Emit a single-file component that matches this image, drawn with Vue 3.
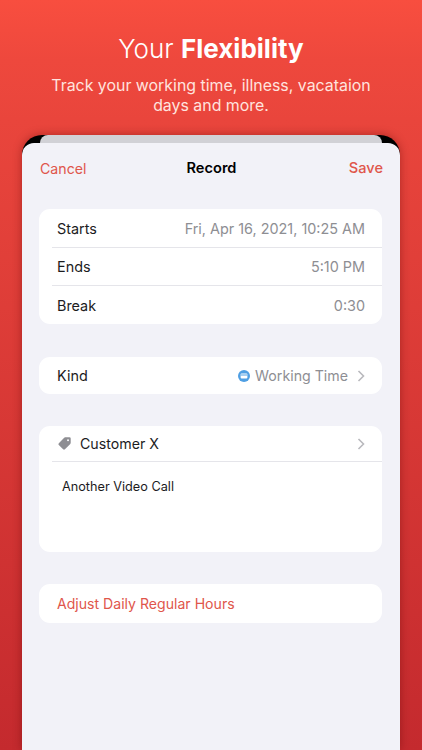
<script setup>
const timeRows = [
  { label: 'Starts', value: 'Fri, Apr 16, 2021, 10:25 AM' },
  { label: 'Ends', value: '5:10 PM' },
  { label: 'Break', value: '0:30' }
]
</script>

<template>
  <div class="page">
    <header class="hero">
      <h1>Your <b>Flexibility</b></h1>
      <p>Track your working time, illness, vacataion<br />days and more.</p>
    </header>
    <section class="phone">
      <div class="strip"></div>
      <div class="sheet">
        <nav class="nav">
          <span class="red">Cancel</span>
          <strong>Record</strong>
          <span class="red save">Save</span>
        </nav>
        <div class="card first">
          <div v-for="row in timeRows" :key="row.label" class="row">
            <span>{{ row.label }}</span>
            <span class="muted">{{ row.value }}</span>
          </div>
        </div>
        <div class="card">
          <div class="row kind-row">
            <span>Kind</span>
            <span class="muted inline small">
              <svg class="kind" width="12" height="12" viewBox="0 0 12 12">
                <circle cx="6" cy="6" r="6" fill="#4f9fe3" />
                <rect x="2.6" y="3.4" width="6.8" height="5" rx="1" fill="#fff" />
                <rect x="2.6" y="4.500" width="6.8" height="1" fill="#4f9fe3" />
              </svg>
              Working Time
              <svg class="chev" width="8" height="12" viewBox="0 0 8 12"><path d="M1.5 1l5 5-5 5" /></svg>
            </span>
          </div>
        </div>
        <div class="card">
          <div class="row customer">
            <span class="inline tagged small">
              <svg width="15" height="15" viewBox="0 0 14 14"><path d="M7.6 1.2h4a1.2 1.2 0 0 1 1.2 1.2v4a1.4 1.4 0 0 1-.4 1l-5 5a1.2 1.2 0 0 1-1.7 0l-4-4a1.2 1.2 0 0 1 0-1.700l5-5a1.4 1.4 0 0 1 .9-.5zM10.3 3a.9.9 0 1 0 0 1.800a.9.9 0 0 0 0-1.800z" fill="#8e8e93" fill-rule="evenodd" /></svg>
              Customer X
            </span>
            <svg class="chev" width="8" height="12" viewBox="0 0 8 12"><path d="M1.5 1l5 5-5 5" /></svg>
          </div>
          <div class="note">Another Video Call</div>
        </div>
        <div class="card">
          <div class="row red action">Adjust Daily Regular Hours</div>
        </div>
      </div>
    </section>
  </div>
</template>

<style>
html, body { margin: 0; }
</style>

<style scoped>
.page {
  width: 422px;
  height: 750px;
  overflow: hidden;
  background: linear-gradient(#f84e3f 0, #ee483d 8%, #e9453c 16%, #c42a2e 100%);
  font-family: Inter, "Liberation Sans", sans-serif;
  color: #1c1c1e;
}
.hero {
  height: 135px;
  box-sizing: border-box;
  padding-top: 33px;
  text-align: center;
  color: #fff;
}
.hero h1 {
  margin: 0;
  font-size: 26px;
  line-height: 32px;
  font-weight: 300;
}
.hero b { font-weight: 700; }
.hero p {
  margin: 11px 0 0;
  font-size: 15.9px;
  line-height: 20px;
  color: #ffe3df;
}
.phone {
  margin: 0 22px;
  height: 615px;
  background: #000;
  border-radius: 20px 20px 0 0;
  overflow: hidden;
  box-shadow: 0 0 10px rgba(90, 0, 0, .4);
  display: flex;
  flex-direction: column;
}
.strip {
  height: 8px;
  flex: none;
  margin: 0 18px;
  background: #d1d1d6;
  border-radius: 8px 8px 0 0;
}
.sheet {
  flex: 1;
  background: #f2f2f8;
  border-radius: 12px 12px 0 0;
  padding: 0 18px 0 17px;
}
.nav {
  height: 50px;
  margin: 0 -1px 16px 1px;
  display: grid;
  grid-template-columns: 1fr auto 1fr;
  align-items: center;
  font-size: 14.2px;
}
.nav strong { font-weight: 600; font-size: 14.6px; color: #000; }
.red { color: #e0564b; }
.save { font-weight: 500; font-size: 14.6px; text-align: right; }
.card {
  background: #fff;
  border-radius: 11px;
  margin-bottom: 32px;
  padding-left: 13px;
  font-size: 14.4px;
}
.card.first { margin-bottom: 33px; }
.row {
  height: 38px;
  padding: 0 17px 0 5px;
  box-sizing: border-box;
  display: flex;
  justify-content: space-between;
  align-items: center;
}
.row + .row { border-top: 1px solid #e5e5ea; }
.row:last-child:not(:first-child) { height: 39px; }
.kind-row { height: 37px; }
.customer { height: 35px; }
.muted { color: #8e8e93; }
.inline { display: flex; align-items: center; gap: 5px; }
.small { font-size: 14.2px; }
.kind { flex: none; }
.chev { flex: none; margin-left: 4px; }
.chev path { fill: none; stroke: #b9b9bd; stroke-width: 1.6; }
.tagged { gap: 8px; }
.note {
  height: 91px;
  box-sizing: border-box;
  border-top: 1px solid #e5e5ea;
  padding: 16px 10px 0;
  font-size: 12.7px;
  line-height: 18px;
}
.action { height: 39px; font-size: 14.1px; }
</style>
